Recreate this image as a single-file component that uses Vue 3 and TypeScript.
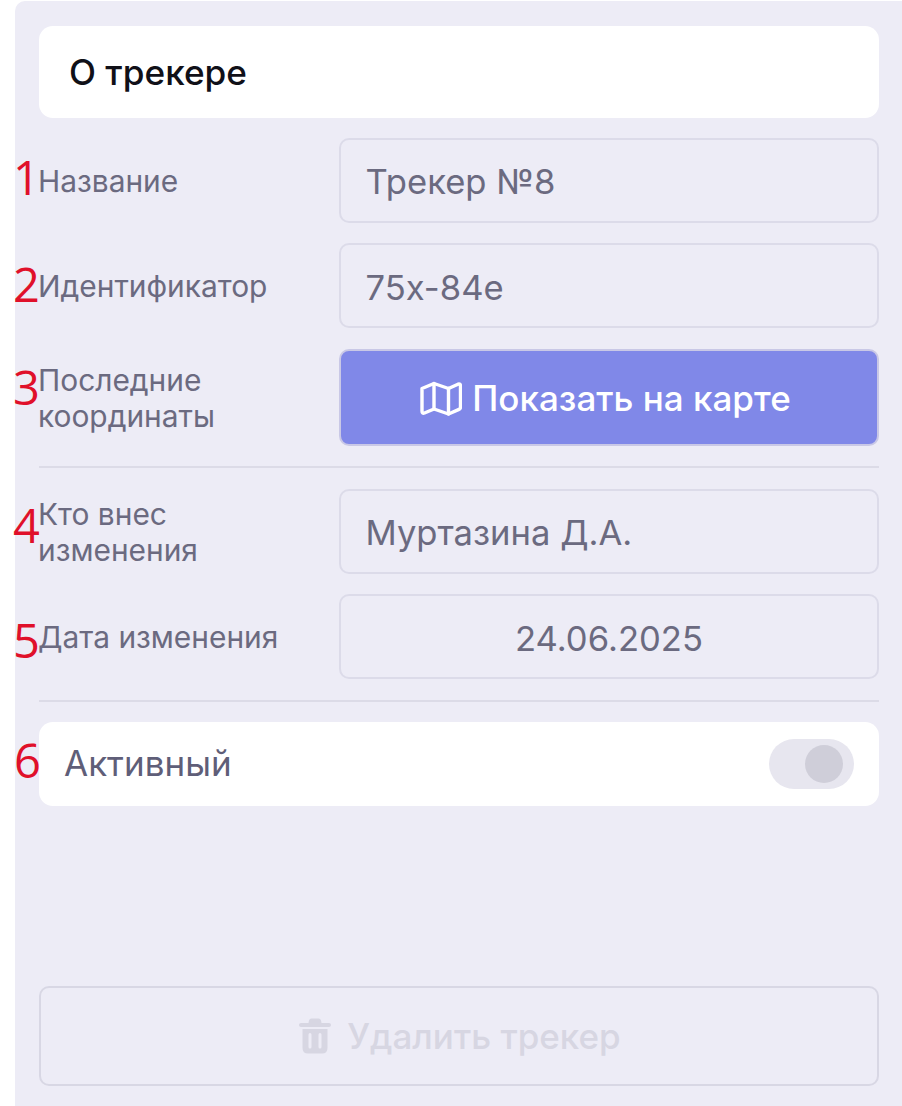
<script setup lang="ts">
interface Row { n: string; label: string; value: string; center?: boolean }
const first: Row[] = [
  { n: '1', label: 'Название', value: 'Трекер №8' },
  { n: '2', label: 'Идентификатор', value: '75x-84e' },
]
const second: Row[] = [
  { n: '4', label: 'Кто внес изменения', value: 'Муртазина Д.А.' },
  { n: '5', label: 'Дата изменения', value: '24.06.2025', center: true },
]
</script>

<template>
  <div class="panel">
    <div class="header">О трекере</div>

    <div v-for="r in first" :key="r.n" class="row">
      <span class="mark" :class="'mark-' + r.n">{{ r.n }}</span>
      <div class="label">{{ r.label }}</div>
      <div class="field">{{ r.value }}</div>
    </div>

    <div class="row">
      <span class="mark mark-3">3</span>
      <div class="label">Последние координаты</div>
      <button class="map-btn" type="button">
        <svg class="map-icon" viewBox="0 0 42 35" fill="none" stroke="currentColor" stroke-width="3.400" stroke-linejoin="round" stroke-linecap="round">
          <path d="M2 7.500 L14 2.500 L28.500 7.500 L38 3.200 Q40.500 2.400 40.500 5 V26 Q40.500 27.800 39 28.400 L28.500 33 L14 28 L4.500 32 Q2 32.800 2 30 Z" />
          <path d="M14 2.500 V28 M28.500 7.500 V33" />
        </svg>
        <span>Показать на карте</span>
      </button>
    </div>

    <hr class="divider" />

    <div v-for="r in second" :key="r.n" class="row">
      <span class="mark" :class="'mark-' + r.n">{{ r.n }}</span>
      <div class="label">{{ r.label }}</div>
      <div class="field" :class="{ center: r.center }">{{ r.value }}</div>
    </div>

    <hr class="divider" />

    <div class="active">
      <span class="mark mark-6">6</span>
      <span class="active-text">Активный</span>
      <span class="toggle"><span class="knob"></span></span>
    </div>

    <button class="delete-btn" type="button">
      <svg class="trash-icon" viewBox="0 0 32 36" fill="currentColor">
        <path d="M10 2.500 Q10.500 0.500 12.500 0.500 H19.500 Q21.500 0.500 22 2.500 L22.500 5 H30 Q32 5 32 7 Q32 9 30 9 H2 Q0 9 0 7 Q0 5 2 5 H9.500 Z" />
        <path fill-rule="evenodd" d="M3.500 11 H28.500 V30 Q28.500 35.500 23 35.500 H9 Q3.500 35.500 3.500 30 Z M11 15 Q9.500 15 9.500 16.500 V29 Q9.500 30.500 11 30.500 Q12.500 30.500 12.500 29 V16.500 Q12.500 15 11 15 Z M21 15 Q19.500 15 19.500 16.500 V29 Q19.500 30.500 21 30.500 Q22.500 30.500 22.500 29 V16.500 Q22.500 15 21 15 Z" />
      </svg>
      <span>Удалить трекер</span>
    </button>
  </div>
</template>

<style>
html, body { margin: 0; background: #ffffff; }
</style>

<style scoped>
.panel {
  box-sizing: border-box;
  height: 1105px;
  margin: 1px 0 0 15px;
  padding: 24.500px 23px 20.500px 24px;
  background: #edecf6;
  border-radius: 10px 0 0 0;
  display: flex;
  flex-direction: column;
  gap: 20.800px;
  font-family: Inter, "Noto Sans", sans-serif;
}
.header {
  flex: none;
  height: 92px;
  padding-left: 30px;
  display: flex;
  align-items: center;
  background: #fff;
  border-radius: 14px;
  color: #101018;
  font-size: 35.200px;
  font-weight: 500;
}
.row {
  flex: none;
  position: relative;
  display: grid;
  grid-template-columns: 300px 1fr;
  align-items: center;
}
.label {
  width: 260px;
  margin-left: -1px;
  padding-top: 2px;
  color: #6b6a80;
  font-size: 29.900px;
  line-height: 36.500px;
}
.field {
  box-sizing: border-box;
  height: 84.400px;
  padding: 2px 0 0 24.500px;
  display: flex;
  align-items: center;
  border: 2px solid #dcdbe9;
  border-radius: 10px;
  color: #6b6a80;
  font-size: 34.600px;
}
.field.center {
  justify-content: center;
  padding-left: 0;
}
.mark {
  position: absolute;
  left: -26px;
  top: 50%;
  transform: translateY(-50%);
  color: #e0102a;
  font-family: "Open Sans", sans-serif;
  font-size: 47px;
  line-height: 1;
}
.mark-1 { margin-top: -3px; }
.mark-2 { margin-top: -2px; }
.mark-3 { margin-top: -10px; }
.mark-4 { margin-top: -6px; }
.mark-5 { margin-top: 3px; }
.mark-6 { margin-top: -4px; left: -25px; }
.map-btn {
  flex: none;
  height: 97px;
  padding: 2px 7px 0 0;
  display: flex;
  align-items: center;
  justify-content: center;
  gap: 10px;
  background: #8088e8;
  border: 2px solid #c9c8e6;
  border-radius: 10px;
  color: #fff;
  font-family: inherit;
  font-size: 35px;
  font-weight: 500;
}
.map-icon {
  width: 42px;
  height: 35px;
}
.divider {
  flex: none;
  width: 100%;
  height: 2px;
  margin: 0;
  border: 0;
  background: #dcdbe7;
}
.active {
  flex: none;
  position: relative;
  height: 84px;
  padding: 0 25px;
  display: flex;
  align-items: center;
  justify-content: space-between;
  background: #fff;
  border-radius: 14px;
  color: #5f5e78;
  font-size: 35px;
}
.active-text {
  padding-bottom: 2px;
}
.toggle {
  width: 85px;
  height: 50px;
  padding: 0 11px;
  box-sizing: border-box;
  display: flex;
  align-items: center;
  justify-content: flex-end;
  background: #e7e6ef;
  border-radius: 25px;
}
.knob {
  width: 38px;
  height: 38px;
  border-radius: 50%;
  background: #cfced9;
}
.delete-btn {
  flex: none;
  height: 100px;
  margin-top: auto;
  padding: 0 0 0 2px;
  display: flex;
  align-items: center;
  justify-content: center;
  gap: 16px;
  background: transparent;
  border: 2px solid #d8d7e4;
  border-radius: 10px;
  color: #d7d6e2;
  font-family: inherit;
  font-size: 35px;
  font-weight: 500;
}
.trash-icon {
  width: 32px;
  height: 36px;
}
</style>
